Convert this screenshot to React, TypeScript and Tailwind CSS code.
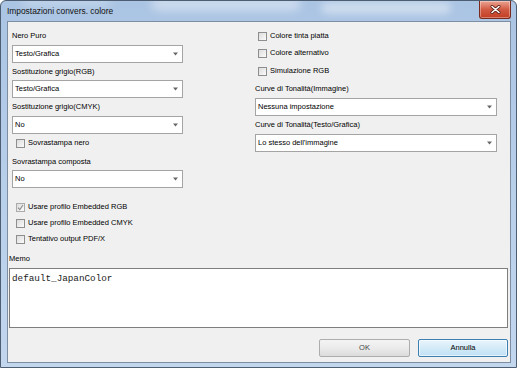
import React from "react";

const sans = "[font-family:'Liberation_Sans',Arial,sans-serif]";

function Label({ text, className = "" }: { text: string; className?: string }) {
  return <div className={`h-[10px] leading-[10px] whitespace-nowrap ${className}`}>{text}</div>;
}

function Combo({ value, className = "" }: { value: string; className?: string }) {
  return (
    <div
      className={`flex h-[18px] items-center justify-between border border-[#a4a4a4] bg-white pl-[2px] pr-[4px] ${className}`}
    >
      <span className="leading-[10px]">{value}</span>
      <svg width="5" height="4" viewBox="0 0 5 4">
        <polygon points="0,0.5 5,0.5 2.5,3.5" fill="#666" />
      </svg>
    </div>
  );
}

function Check({ label, checked = false, className = "" }: { label: string; checked?: boolean; className?: string }) {
  return (
    <div className={`flex h-[10px] items-center gap-[3px] ${className}`}>
      <div
        className={`flex h-[9px] w-[9px] shrink-0 items-center justify-center border bg-gradient-to-br from-[#dcdcdc] to-[#fbfbfb] ${
          checked ? "border-[#ababab]" : "border-[#8e8e8e]"
        }`}
      >
        {checked && (
          <svg width="7" height="7" viewBox="0 0 7 7">
            <path d="M1 3.6 L2.8 5.6 L6 1" stroke="#8c8c8c" strokeWidth="1.1" fill="none" />
          </svg>
        )}
      </div>
      <span className="leading-[10px] whitespace-nowrap">{label}</span>
    </div>
  );
}

export default function App() {
  return (
    <div className={`h-[368px] w-[517px] bg-white text-[7.5px] text-black ${sans}`}>
      <div className="relative flex h-[368px] w-[517px] flex-col overflow-hidden rounded-t-[6px] border border-[#4e5e72] bg-gradient-to-b from-[#aac4e3] via-[#b8cfea] to-[#c2d6ee]">
        {/* glass streaks */}
        <div className="absolute left-[150px] top-[-4px] h-[14px] w-[150px] rounded-full bg-white/40 blur-[5px]"></div>
        <div className="absolute left-[320px] top-[2px] h-[10px] w-[130px] rounded-full bg-white/50 blur-[4px]"></div>
        <div className="absolute left-[20px] top-[-6px] h-[12px] w-[90px] rounded-full bg-white/25 blur-[5px]"></div>

        {/* title bar */}
        <div className="relative flex h-[20px] shrink-0 items-center pl-[6px] text-[8.4px] text-[#111]">
          Impostazioni convers. colore
        </div>
        <div className="absolute right-[5px] top-0 flex h-[18px] w-[32px] items-center justify-center rounded-b-[3px] border border-t-0 border-[#7a2a1c] bg-gradient-to-b from-[#e9a493] via-[#d25a43] to-[#c23d22] shadow-[inset_0_0_0_1px_rgba(255,255,255,0.35)]">
          <svg width="11" height="9" viewBox="0 0 11 9">
            <path d="M2 1.5 L9 7.5 M9 1.5 L2 7.5" stroke="#5a1e14" strokeWidth="3" strokeLinecap="round" />
            <path d="M2 1.5 L9 7.5 M9 1.5 L2 7.5" stroke="#ffffff" strokeWidth="1.6" strokeLinecap="round" />
          </svg>
        </div>

        {/* client area */}
        <div className="ml-[6px] mr-[5px] mb-[4px] flex h-[342px] flex-col border border-[#7d8ea3] bg-[#f0f0f0]">
          <div className="flex">
            {/* left column */}
            <div className="ml-[4px] flex w-[171px] flex-col pt-[9px]">
              <Label text="Nero Puro" />
              <Combo value="Testo/Grafica" className="mt-[4px]" />
              <Label text="Sostituzione grigio(RGB)" className="mt-[4px]" />
              <Combo value="Testo/Grafica" className="mt-[3px]" />
              <Label text="Sostituzione grigio(CMYK)" className="mt-[4px]" />
              <Combo value="No" className="mt-[4px]" />
              <Check label="Sovrastampa nero" className="mt-[4px] pl-[4px]" />
              <Label text="Sovrastampa composta" className="mt-[9px]" />
              <Combo value="No" className="mt-[3px]" />
              <Check label="Usare profilo Embedded RGB" checked className="mt-[14px] pl-[4px]" />
              <Check label="Usare profilo Embedded CMYK" className="mt-[6px] pl-[4px]" />
              <Check label="Tentativo output PDF/X" className="mt-[6px] pl-[4px]" />
            </div>

            {/* right column */}
            <div className="ml-[72px] flex w-[242px] flex-col pt-[9px]">
              <Check label="Colore tinta piatta" className="pl-[3px]" />
              <Check label="Colore alternativo" className="mt-[7px] pl-[3px]" />
              <Check label="Simulazione RGB" className="mt-[8px] pl-[3px]" />
              <Label text="Curve di Tonalità(Immagine)" className="mt-[8px]" />
              <Combo value="Nessuna impostazione" className="mt-[4px]" />
              <Label text="Curve di Tonalità(Testo/Grafica)" className="mt-[4px]" />
              <Combo value="Lo stesso dell'immagine" className="mt-[4px]" />
            </div>
          </div>

          {/* memo */}
          <Label text="Memo" className="ml-[1px] mt-[10px]" />
          <div className="ml-[1px] mr-[2px] mt-[4px] h-[60px] border border-[#7e7e7e] bg-white pl-[2px] pt-[4px] text-[9.3px] leading-[11px] text-[#222] [font-family:'Liberation_Mono','Courier_New',monospace]">
            default_JapanColor
          </div>

          {/* buttons */}
          <div className="mr-[2px] mt-[11px] flex justify-end gap-[8px]">
            <div className="flex h-[18px] w-[91px] items-center justify-center rounded-[2px] border border-[#adadad] bg-gradient-to-b from-[#f4f4f4] via-[#ebebeb] to-[#dcdcdc] text-[#444]">
              OK
            </div>
            <div className="flex h-[18px] w-[90px] items-center justify-center rounded-[2px] border border-[#3c7fb1] bg-gradient-to-b from-[#e9f4fb] via-[#d4ebf8] to-[#bfe0f5] shadow-[inset_0_0_0_1px_rgba(255,255,255,0.6)]">
              Annulla
            </div>
          </div>
        </div>
      </div>
    </div>
  );
}
